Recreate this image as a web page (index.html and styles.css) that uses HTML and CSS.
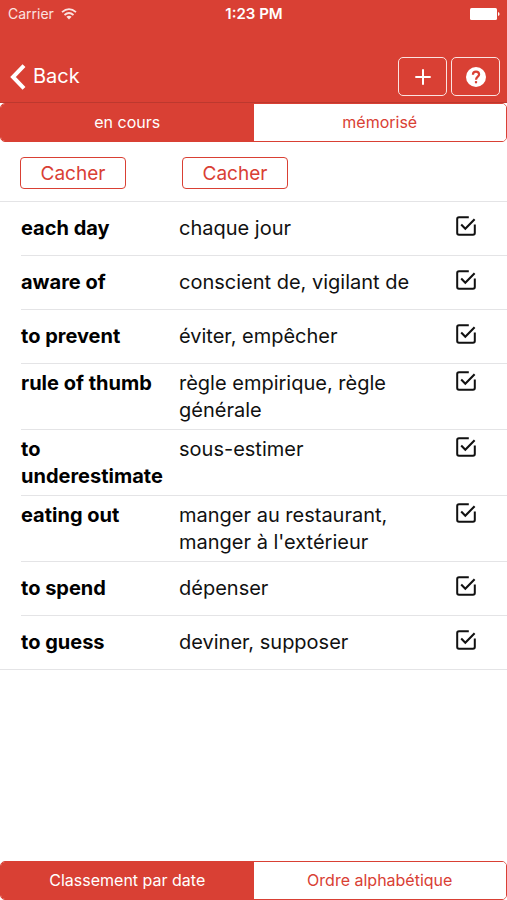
FILE: index.html
```
<!DOCTYPE html>
<html lang="fr">
<head>
    <meta charset="UTF-8">
    <meta name="viewport" content="width=device-width, initial-scale=1.0">
    <title>Vocabulaire</title>
    <link rel="stylesheet" href="styles.css">
</head>
<body>
    <svg class="sprite" aria-hidden="true">
        <symbol id="icon-check" viewBox="0 0 20 20">
            <path d="M12.8 1.2H3Q1.2 1.2 1.2 3V17Q1.2 18.8 3 18.8H17Q18.8 18.8 18.8 17V8.5" fill="none" stroke="currentColor" stroke-width="2"/>
            <path d="M5.2 8.6L9.3 12.7L18.6 3.2" fill="none" stroke="currentColor" stroke-width="2.1"/>
        </symbol>
    </svg>

    <header class="top">
        <div class="status-bar">
            <div class="carrier">
                <span>Carrier</span>
                <svg class="wifi" viewBox="0 0 16 12" aria-hidden="true">
                    <path d="M1 4.2Q8 -2 15 4.2M3.5 7Q8 3 12.5 7" fill="none" stroke="currentColor" stroke-width="1.8"/>
                    <path d="M5.4 8.7Q8 6.6 10.6 8.7L8 11.4Z" fill="currentColor"/>
                </svg>
            </div>
            <div class="time">1:23 PM</div>
            <svg class="battery" viewBox="0 0 30 12" aria-hidden="true">
                <rect width="27" height="12" rx="1.5" fill="currentColor"/>
                <path d="M28 4Q29.6 4.5 29.6 6T28 8Z" fill="currentColor"/>
            </svg>
        </div>
        <nav class="nav-bar">
            <a class="back" href="#">
                <svg viewBox="0 0 16 26" aria-hidden="true">
                    <path d="M14 1.6L3 13L14 24.4" fill="none" stroke="currentColor" stroke-width="4"/>
                </svg>
                <span>Back</span>
            </a>
            <div class="actions">
                <button class="icon-button" type="button" aria-label="Ajouter">
                    <svg viewBox="0 0 20 20" aria-hidden="true">
                        <path d="M10 2.3V17.7M2.3 10H17.7" stroke="currentColor" stroke-width="2"/>
                    </svg>
                </button>
                <button class="icon-button" type="button" aria-label="Aide">
                    <svg viewBox="0 0 20 20" aria-hidden="true">
                        <circle cx="10" cy="10" r="10" fill="currentColor"/>
                        <path d="M6.9 7.7Q7 4.6 10 4.6T13.1 7.5C13.1 9.6 10 9.8 10 12.7" fill="none" stroke="#d94034" stroke-width="2.2"/>
                        <path d="M8.9 14.1H11.1V16.3H8.9Z" fill="#d94034"/>
                    </svg>
                </button>
            </div>
        </nav>
    </header>

    <main>
        <div class="segments">
            <button class="segment active" type="button">en cours</button>
            <button class="segment" type="button">mémorisé</button>
        </div>

        <div class="hide-row">
            <button class="hide-button" type="button">Cacher</button>
            <button class="hide-button" type="button">Cacher</button>
        </div>

        <section class="words">
            <table class="word-table">
                <tr>
                    <th scope="row">each day</th>
                    <td>chaque jour</td>
                    <td class="check-cell"><label class="check"><input type="checkbox" aria-label="each day" checked><svg><use href="#icon-check"/></svg></label></td>
                </tr>
                <tr>
                    <th scope="row">aware of</th>
                    <td>conscient de, vigilant de</td>
                    <td class="check-cell"><label class="check"><input type="checkbox" aria-label="aware of" checked><svg><use href="#icon-check"/></svg></label></td>
                </tr>
                <tr>
                    <th scope="row">to prevent</th>
                    <td>éviter, empêcher</td>
                    <td class="check-cell"><label class="check"><input type="checkbox" aria-label="to prevent" checked><svg><use href="#icon-check"/></svg></label></td>
                </tr>
                <tr class="tall">
                    <th scope="row">rule of thumb</th>
                    <td>règle empirique, règle générale</td>
                    <td class="check-cell"><label class="check"><input type="checkbox" aria-label="rule of thumb" checked><svg><use href="#icon-check"/></svg></label></td>
                </tr>
                <tr class="tall">
                    <th scope="row">to underestimate</th>
                    <td>sous-estimer</td>
                    <td class="check-cell"><label class="check"><input type="checkbox" aria-label="to underestimate" checked><svg><use href="#icon-check"/></svg></label></td>
                </tr>
                <tr class="tall">
                    <th scope="row">eating out</th>
                    <td>manger au restaurant, manger à l'extérieur</td>
                    <td class="check-cell"><label class="check"><input type="checkbox" aria-label="eating out" checked><svg><use href="#icon-check"/></svg></label></td>
                </tr>
                <tr>
                    <th scope="row">to spend</th>
                    <td>dépenser</td>
                    <td class="check-cell"><label class="check"><input type="checkbox" aria-label="to spend" checked><svg><use href="#icon-check"/></svg></label></td>
                </tr>
                <tr>
                    <th scope="row">to guess</th>
                    <td>deviner, supposer</td>
                    <td class="check-cell"><label class="check"><input type="checkbox" aria-label="to guess" checked><svg><use href="#icon-check"/></svg></label></td>
                </tr>
            </table>
        </section>
    </main>

    <footer class="segments">
        <button class="segment active" type="button">Classement par date</button>
        <button class="segment" type="button">Ordre alphabétique</button>
    </footer>
</body>
</html>
```
FILE: styles.css
```
/* General Styling */
* {
    box-sizing: border-box;
}

body {
    display: flex;
    flex-direction: column;
    min-height: 100vh;
    margin: 0;
    background: #fff;
    color: #111;
    font-family: Inter, "Liberation Sans", sans-serif;
    font-size: 20px;
    line-height: 27px;
}

button {
    padding: 0;
    font-family: inherit;
    cursor: pointer;
}

svg {
    display: block;
}

.sprite {
    position: absolute;
    width: 0;
    height: 0;
}

/* Header */
.top {
    background: #d94034;
    color: #fff;
    border-bottom: 1px solid #bd382e;
}

.status-bar {
    display: grid;
    grid-template-columns: 1fr auto 1fr;
    align-items: center;
    height: 27px;
    padding: 0 7px 0 8px;
    font-size: 14px;
}

.carrier {
    display: flex;
    align-items: center;
    gap: 7px;
    color: #fbe3e1;
}

.wifi {
    width: 16px;
    height: 12px;
}

.time {
    font-size: 15px;
    font-weight: 600;
}

.battery {
    width: 30px;
    height: 12px;
    justify-self: end;
}

.nav-bar {
    display: flex;
    justify-content: space-between;
    align-items: flex-end;
    height: 75px;
    padding: 0 7px 6px 10px;
}

.back {
    display: flex;
    align-items: center;
    gap: 7px;
    height: 39px;
    color: #fff;
    text-decoration: none;
}

.back svg {
    width: 16px;
    height: 26px;
}

.actions {
    display: flex;
    gap: 4px;
}

.icon-button {
    display: flex;
    justify-content: center;
    align-items: center;
    width: 49px;
    height: 39px;
    background: none;
    border: 1px solid #fbe3e1;
    border-radius: 5px;
    color: #fff;
}

.icon-button svg {
    width: 20px;
    height: 20px;
}

/* Segmented controls */
main {
    flex: 1;
}

.segments {
    display: flex;
    background: #fff;
    border: 1px solid #d94034;
    border-radius: 5px;
    overflow: hidden;
}

.segment {
    flex: 1;
    height: 37px;
    padding-bottom: 2px;
    background: #fff;
    border: none;
    color: #d94034;
    font-size: 16px;
}

.segment.active {
    background: #d94034;
    color: #fff;
}

/* Hide buttons */
.hide-row {
    display: flex;
    gap: 56px;
    padding: 15px 20px 12px;
}

.hide-button {
    width: 106px;
    height: 32px;
    background: #fff;
    border: 1px solid #d94034;
    border-radius: 4px;
    color: #d94034;
    font-size: 19px;
}

/* Word list */
.words {
    padding-left: 21px;
    border-top: 1px solid #e4e4e6;
    border-bottom: 1px solid #e4e4e6;
}

.word-table {
    width: 100%;
    border-collapse: collapse;
    table-layout: fixed;
}

.word-table tr + tr {
    border-top: 1px solid #e4e4e6;
}

.word-table th,
.word-table td {
    padding: 13px 0;
    text-align: left;
    vertical-align: top;
}

.word-table th {
    width: 158px;
    color: #000;
    font-weight: 700;
}

.word-table .check-cell {
    width: 92px;
}

.word-table .tall th,
.word-table .tall td {
    padding: 6px 0 5px;
}

.check {
    position: relative;
    display: block;
    width: 20px;
    height: 20px;
    margin: 1px 0 0 41px;
    cursor: pointer;
}

.check input {
    position: absolute;
    inset: 0;
    margin: 0;
    appearance: none;
    cursor: pointer;
}

.check svg {
    width: 20px;
    height: 20px;
}
```
